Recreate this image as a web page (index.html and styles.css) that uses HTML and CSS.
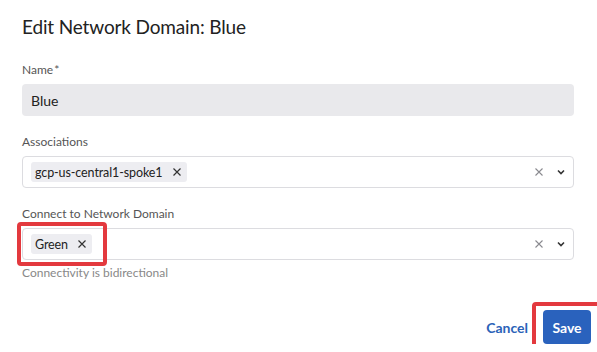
FILE: index.html
```html
<!DOCTYPE html>
<html lang="en">
<head>
    <meta charset="UTF-8">
    <meta name="viewport" content="width=device-width, initial-scale=1.0">
    <title>Edit Network Domain</title>
    <link rel="stylesheet" href="styles.css">
</head>
<body>
    <div class="dialog">
        <h1 class="title">Edit Network Domain: Blue</h1>

        <div class="field">
            <label class="label">Name<span class="req">*</span></label>
            <div class="input">Blue</div>
        </div>

        <div class="field">
            <label class="label">Associations</label>
            <div class="select">
                <div class="chips">
                    <span class="chip">gcp-us-central1-spoke1
                        <svg class="chip-x" width="8" height="8" viewBox="0 0 8 8"><path d="M0.5 0.5 L7.5 7.5 M7.5 0.5 L0.5 7.5" stroke="#333" stroke-width="1.2"/></svg>
                    </span>
                </div>
                <svg class="clear" width="8" height="8" viewBox="0 0 8 8"><path d="M0.5 0.5 L7.5 7.5 M7.5 0.5 L0.5 7.5" stroke="#8a8a8f" stroke-width="1.1"/></svg>
                <svg class="chevron" width="8" height="6" viewBox="0 0 8 6"><path d="M1 1.5 L4 4.5 L7 1.5" fill="none" stroke="#333" stroke-width="1.6"/></svg>
            </div>
        </div>

        <div class="field">
            <label class="label">Connect to Network Domain</label>
            <div class="select">
                <div class="chips">
                    <span class="chip">Green
                        <svg class="chip-x" width="8" height="8" viewBox="0 0 8 8"><path d="M0.5 0.5 L7.5 7.5 M7.5 0.5 L0.5 7.5" stroke="#333" stroke-width="1.2"/></svg>
                        <span class="highlight chip-box"></span>
                    </span>
                </div>
                <svg class="clear" width="8" height="8" viewBox="0 0 8 8"><path d="M0.5 0.5 L7.5 7.5 M7.5 0.5 L0.5 7.5" stroke="#8a8a8f" stroke-width="1.1"/></svg>
                <svg class="chevron" width="8" height="6" viewBox="0 0 8 6"><path d="M1 1.5 L4 4.5 L7 1.5" fill="none" stroke="#333" stroke-width="1.6"/></svg>
            </div>
            <div class="help">Connectivity is bidirectional</div>
        </div>

        <div class="footer">
            <button class="btn-link">Cancel</button>
            <button class="btn-primary">Save<span class="highlight save-box"></span></button>
        </div>
    </div>
</body>
</html>
```

FILE: styles.css
```css
body {
    margin: 0;
    font-family: Lato, "Liberation Sans", sans-serif;
    background-color: #ffffff;
    color: #222;
    overflow: hidden;
}
.dialog {
    padding: 14px 23px 0 22px;
}
.title {
    margin: 0 0 22px 0;
    font-size: 19px;
    letter-spacing: -0.15px;
    font-weight: 400;
    line-height: 26px;
    color: #222;
}
.field {
    margin-bottom: 18px;
}
.label {
    display: block;
    font-size: 12px;
    line-height: 16px;
    color: #555;
    margin-bottom: 6px;
}
.req {
    margin-left: 1px;
}
.input {
    height: 32px;
    box-sizing: border-box;
    background-color: #e9e9ec;
    border-radius: 4px;
    padding: 0 9px;
    display: flex;
    align-items: center;
    font-size: 14px;
    color: #222;
}
.select {
    height: 32px;
    box-sizing: border-box;
    border: 1px solid #dcdce0;
    border-radius: 4px;
    display: flex;
    align-items: center;
    padding: 0 8px;
}
.chips {
    flex: 1;
    display: flex;
}
.chip {
    position: relative;
    display: inline-flex;
    align-items: center;
    height: 20px;
    background-color: #ededf1;
    border-radius: 3px;
    padding: 0 6px 0 4px;
    font-size: 12.5px;
    letter-spacing: -0.1px;
    color: #222;
}
.chip-x {
    display: block;
    margin-left: 10px;
}
.clear {
    display: block;
    margin-right: 14px;
}
.chevron {
    display: block;
}
.help {
    font-size: 12px;
    line-height: 16px;
    color: #888;
    margin-top: 5px;
}
.footer {
    display: flex;
    justify-content: flex-end;
    align-items: center;
    margin-top: 29px;
    margin-right: -17px;
}
.btn-link {
    background: none;
    border: none;
    font-family: inherit;
    font-size: 14px;
    font-weight: bold;
    color: #2b62b8;
    padding: 0;
    margin-right: 15px;
    cursor: pointer;
}
.btn-primary {
    position: relative;
    height: 34px;
    width: 48px;
    background-color: #2a62bd;
    color: white;
    border: none;
    border-radius: 4px;
    font-family: inherit;
    font-size: 14px;
    font-weight: bold;
    cursor: pointer;
}
.highlight {
    position: absolute;
    border: 4px solid #e3393e;
    border-radius: 4px;
}
.chip-box {
    top: -12px;
    left: -14px;
    right: -15px;
    bottom: -12px;
}
.save-box {
    top: -8px;
    left: -11px;
    right: -12px;
    bottom: -7px;
}
```
